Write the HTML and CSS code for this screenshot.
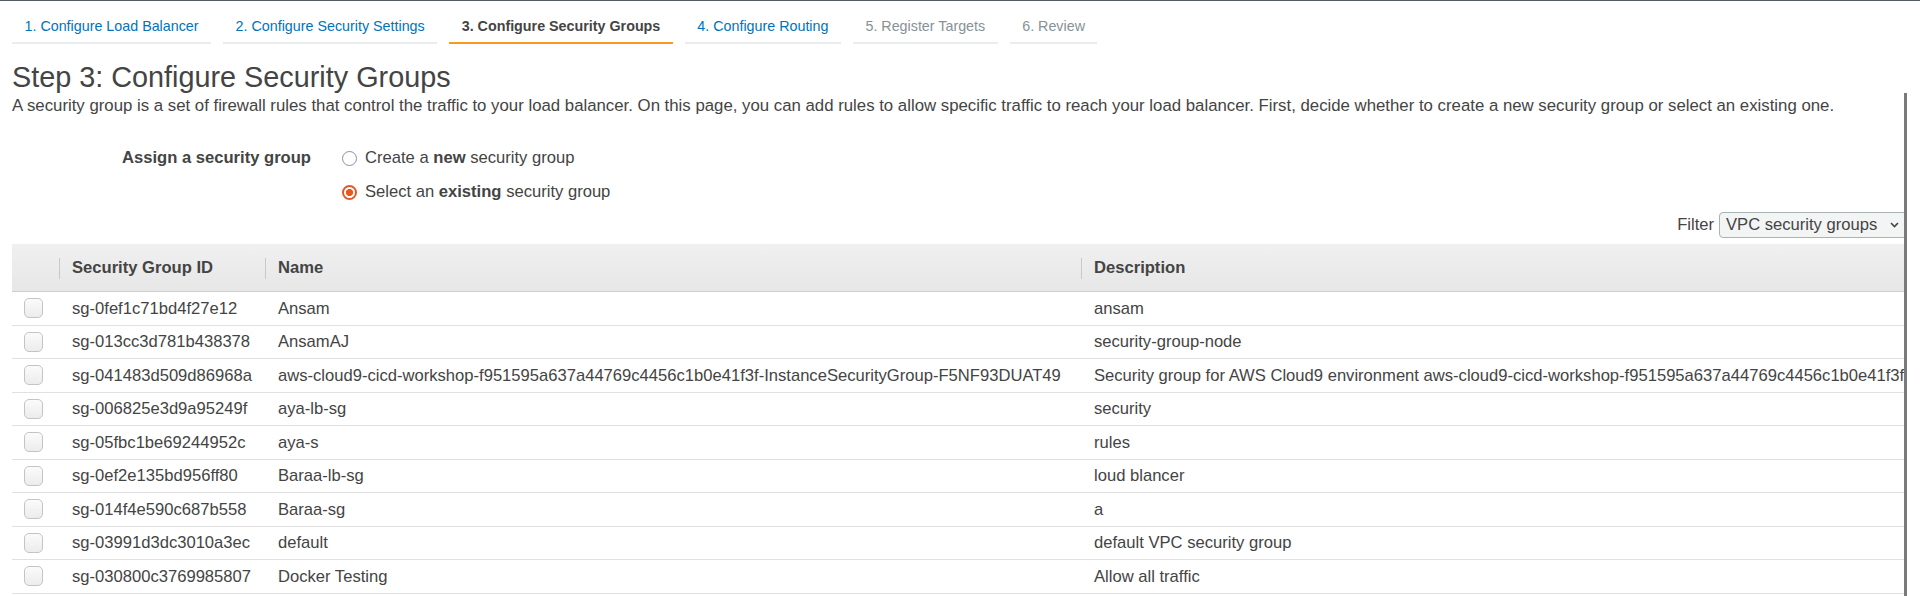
FILE: index.html
```html
<!DOCTYPE html>
<html lang="en">
<head>
<meta charset="utf-8">
<title>Configure Security Groups</title>
<link rel="stylesheet" href="styles.css">
</head>
<body>
<div class="page">
  <nav class="tabs">
    <a class="tab tab-link" href="#">1. Configure Load Balancer</a>
    <a class="tab tab-link" href="#">2. Configure Security Settings</a>
    <span class="tab tab-active">3. Configure Security Groups</span>
    <a class="tab tab-link" href="#">4. Configure Routing</a>
    <span class="tab tab-disabled">5. Register Targets</span>
    <span class="tab tab-disabled">6. Review</span>
  </nav>
  <main class="content">
    <h1 class="title">Step 3: Configure Security Groups</h1>
    <p class="desc">A security group is a set of firewall rules that control the traffic to your load balancer. On this page, you can add rules to allow specific traffic to reach your load balancer. First, decide whether to create a new security group or select an existing one.</p>
    <div class="assign">
      <div class="assign-label">Assign a security group</div>
      <div class="radios">
        <label class="radio-row"><span class="radio"></span><span>Create a <b>new</b> security group</span></label>
        <label class="radio-row"><span class="radio radio-checked"></span><span>Select an <b>existing</b> security group</span></label>
      </div>
    </div>
    <div class="filter">
      <span class="filter-label">Filter</span>
      <div class="select">
        <span>VPC security groups</span>
        <svg class="chevron" width="9" height="6" viewBox="0 0 9 6"><path d="M1 1 L4.5 4.5 L8 1" fill="none" stroke="#444" stroke-width="1.6"/></svg>
      </div>
    </div>
    <table class="sg-table">
      <colgroup>
        <col class="c-check"><col class="c-id"><col class="c-name"><col class="c-desc">
      </colgroup>
      <thead>
        <tr><th class="col-check"></th><th>Security Group ID</th><th>Name</th><th>Description</th></tr>
      </thead>
      <tbody>
        <tr><td class="col-check"><span class="checkbox"></span></td><td>sg-0fef1c71bd4f27e12</td><td>Ansam</td><td>ansam</td></tr>
        <tr><td class="col-check"><span class="checkbox"></span></td><td>sg-013cc3d781b438378</td><td>AnsamAJ</td><td>security-group-node</td></tr>
        <tr><td class="col-check"><span class="checkbox"></span></td><td>sg-041483d509d86968a</td><td>aws-cloud9-cicd-workshop-f951595a637a44769c4456c1b0e41f3f-InstanceSecurityGroup-F5NF93DUAT49</td><td>Security group for AWS Cloud9 environment aws-cloud9-cicd-workshop-f951595a637a44769c4456c1b0e41f3f</td></tr>
        <tr><td class="col-check"><span class="checkbox"></span></td><td>sg-006825e3d9a95249f</td><td>aya-lb-sg</td><td>security</td></tr>
        <tr><td class="col-check"><span class="checkbox"></span></td><td>sg-05fbc1be69244952c</td><td>aya-s</td><td>rules</td></tr>
        <tr><td class="col-check"><span class="checkbox"></span></td><td>sg-0ef2e135bd956ff80</td><td>Baraa-lb-sg</td><td>loud blancer</td></tr>
        <tr><td class="col-check"><span class="checkbox"></span></td><td>sg-014f4e590c687b558</td><td>Baraa-sg</td><td>a</td></tr>
        <tr><td class="col-check"><span class="checkbox"></span></td><td>sg-03991d3dc3010a3ec</td><td>default</td><td>default VPC security group</td></tr>
        <tr><td class="col-check"><span class="checkbox"></span></td><td>sg-030800c3769985807</td><td>Docker Testing</td><td>Allow all traffic</td></tr>
      </tbody>
    </table>
  </main>
  <div class="scrollbar"></div>
</div>
</body>
</html>
```
FILE: styles.css
```css
html, body {
  margin: 0;
  background: #fff;
}
body {
  font-family: "Liberation Sans", Arial, sans-serif;
  color: #444;
  overflow: hidden;
}
.page {
  position: relative;
  border-top: 1px solid #545b64;
  min-height: 595px;
}

/* wizard tabs */
.tabs {
  display: flex;
  gap: 12px;
  padding-left: 12px;
}
.tab {
  display: block;
  padding: 15px 12.5px 6px;
  font-size: 14.3px;
  line-height: 20px;
  border-bottom: 2px solid #eaeded;
  text-decoration: none;
  white-space: nowrap;
}
.tab-link { color: #0073bb; }
.tab-active {
  color: #444;
  font-weight: bold;
  border-bottom-color: #f89a1c;
}
.tab-disabled { color: #879196; }

/* content */
.content {
  margin-left: 12px;
  width: 1895px;
  overflow: hidden;
}
.title {
  margin: 16px 0 0;
  font-size: 28.8px;
  line-height: 35px;
  font-weight: normal;
  color: #444;
}
.desc {
  margin: 1px 0 0;
  font-size: 16.8px;
  line-height: 20px;
  white-space: nowrap;
}

.assign {
  display: grid;
  grid-template-columns: 299px auto;
  column-gap: 31px;
  margin-top: 25px;
  font-size: 16.6px;
}
.assign-label {
  text-align: right;
  font-weight: bold;
  line-height: 20px;
  padding-top: 7px;
}
.radios {
  display: flex;
  flex-direction: column;
}
.radio-row {
  display: flex;
  align-items: center;
  gap: 8px;
  height: 34px;
  line-height: 20px;
}
.radio {
  box-sizing: border-box;
  flex: none;
  width: 15px;
  height: 15px;
  border-radius: 50%;
  border: 1.5px solid #8c919b;
  background: #fff;
}
.radio-checked {
  border: 2px solid #e8571e;
  background: radial-gradient(circle, #e8571e 0 3.2px, #fff 3.9px);
}

.filter {
  display: flex;
  justify-content: flex-end;
  align-items: center;
  gap: 5px;
  margin: 3px -5px 6px 0;
  font-size: 16.6px;
}
.select {
  box-sizing: border-box;
  display: flex;
  align-items: center;
  justify-content: space-between;
  width: 193px;
  height: 26px;
  padding: 0 12px 0 6px;
  border: 1px solid #a9b2b5;
  border-radius: 4px;
  background: #f3f4f4;
  white-space: nowrap;
}
.chevron { flex: none; }

/* table */
.sg-table {
  border-collapse: separate;
  border-spacing: 0;
  table-layout: fixed;
  width: 2169px;
  font-size: 16.6px;
}
.c-check { width: 47px; }
.c-id { width: 206px; }
.c-name { width: 816px; }
.c-desc { width: 1100px; }

.sg-table th {
  height: 47px;
  padding: 0 12.5px 0 13px;
  border-bottom: 1px solid #cfcfcf;
  text-align: left;
  font-weight: bold;
  color: #444;
  white-space: nowrap;
  background:
    linear-gradient(#c9c9c9, #c9c9c9) no-repeat 0 14px / 1px 21px,
    linear-gradient(#f0f0f0, #e7e7e7);
}
.sg-table th.col-check {
  background: linear-gradient(#f0f0f0, #e7e7e7);
}
.sg-table td {
  height: 31.5px;
  padding: 1px 12.5px 0 13px;
  border-bottom: 1px solid #e1e1e1;
  white-space: nowrap;
  color: #444;
}
.sg-table td.col-check {
  padding: 0 0 0 12px;
  height: 32.5px;
}
.checkbox {
  display: block;
  box-sizing: border-box;
  width: 19px;
  height: 20px;
  border: 1px solid #c4c4c4;
  border-radius: 5px;
  background: linear-gradient(#fbfbfb, #ececec);
}

.scrollbar {
  position: absolute;
  left: 1904px;
  top: 92px;
  bottom: 0;
  width: 3px;
  background: #7b7b7b;
}
```
